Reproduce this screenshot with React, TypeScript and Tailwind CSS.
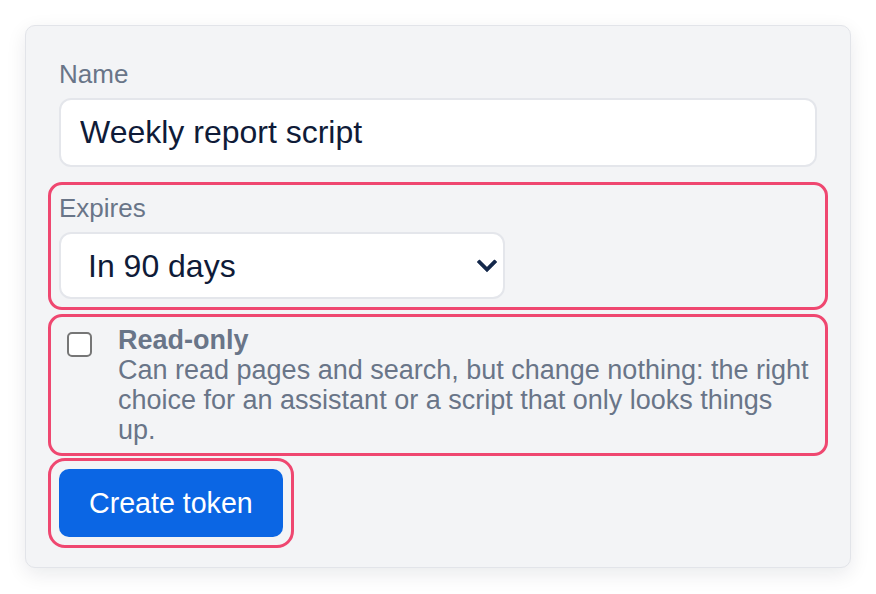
import { useState } from 'react'

const font = { fontFamily: '"Liberation Sans", Arial, sans-serif' }

function Chevron() {
  return (
    <svg width="20" height="13" viewBox="0 0 20 13" className="pointer-events-none absolute right-[8px] top-1/2 -translate-y-1/2">
      <path d="M2.5 2.5 L10 10 L17.5 2.5" fill="none" stroke="#14284b" strokeWidth="3.8" strokeLinecap="square" />
    </svg>
  )
}

export default function App() {
  const [name, setName] = useState('Weekly report script')
  const [expires, setExpires] = useState('90')
  const [readOnly, setReadOnly] = useState(false)

  return (
    <div className="min-h-[594px] bg-white pt-[25px] px-[25px]" style={font}>
      <form
        onSubmit={(e) => e.preventDefault()}
        className="flex flex-col rounded-[10px] border-[1.5px] border-[#e2e4e9] bg-[#f3f4f6] px-[33px] pt-[33px] pb-[30px] shadow-[0_6px_20px_rgba(15,23,42,0.09)]"
      >
        {/* Name */}
        <div>
          <label className="block text-[26px] leading-[30px] text-[#697588] mb-[9px]">Name</label>
          <input
            value={name}
            onChange={(e) => setName(e.target.value)}
            className="block w-full h-[69px] rounded-[12px] border-2 border-[#e4e6eb] bg-white px-[19px] text-[32px] text-[#0f1b38] outline-none"
          />
        </div>

        {/* Expires */}
        <div className="mt-[26px] rounded-[3px] outline-[3px] outline-solid outline-[#ef4770] outline-offset-[8px]">
          <label className="block text-[26px] leading-[30px] text-[#697588] mb-[9px]">Expires</label>
          <div className="relative w-[446px]">
            <select
              value={expires}
              onChange={(e) => setExpires(e.target.value)}
              className="block w-full h-[67px] appearance-none rounded-[12px] border-2 border-[#e4e6eb] bg-white pl-[27px] pr-[40px] text-[32px] text-[#0f1b38] outline-none"
            >
              <option value="30">In 30 days</option>
              <option value="90">In 90 days</option>
              <option value="365">In 1 year</option>
              <option value="never">Never</option>
            </select>
            <Chevron />
          </div>
        </div>

        {/* Read-only */}
        <label className="mt-[26px] flex items-start gap-[26px] pl-[8px] rounded-[3px] outline-[3px] outline-solid outline-[#ef4770] outline-offset-[8px] cursor-pointer">
          <span
            className={
              readOnly
                ? 'mt-[7px] flex h-[25px] w-[25px] shrink-0 items-center justify-center rounded-[5px] border-2 border-[#0b66e4] bg-[#0b66e4]'
                : 'mt-[7px] flex h-[25px] w-[25px] shrink-0 items-center justify-center rounded-[5px] border-2 border-[#767676] bg-white'
            }
          >
            {readOnly && (
              <svg width="16" height="16" viewBox="0 0 16 16">
                <path d="M3 8.5 L6.5 12 L13 4.5" fill="none" stroke="white" strokeWidth="2.4" />
              </svg>
            )}
          </span>
          <input
            type="checkbox"
            checked={readOnly}
            onChange={(e) => setReadOnly(e.target.checked)}
            className="sr-only"
          />
          <span className="flex-1 text-[27px] leading-[30px] text-[#697588]">
            <span className="block font-bold">Read-only</span>
            <span className="block">
              Can read pages and search, but change nothing: the right choice for an assistant or a script that only looks things up.
            </span>
          </span>
        </label>

        {/* Submit */}
        <div className="mt-[24px] w-fit rounded-[6px] outline-[3px] outline-solid outline-[#ef4770] outline-offset-[8px]">
          <button
            type="submit"
            className="block h-[68px] rounded-[10px] bg-[#0b66e4] px-[30px] text-[28.6px] text-white"
          >
            Create token
          </button>
        </div>
      </form>
    </div>
  )
}
